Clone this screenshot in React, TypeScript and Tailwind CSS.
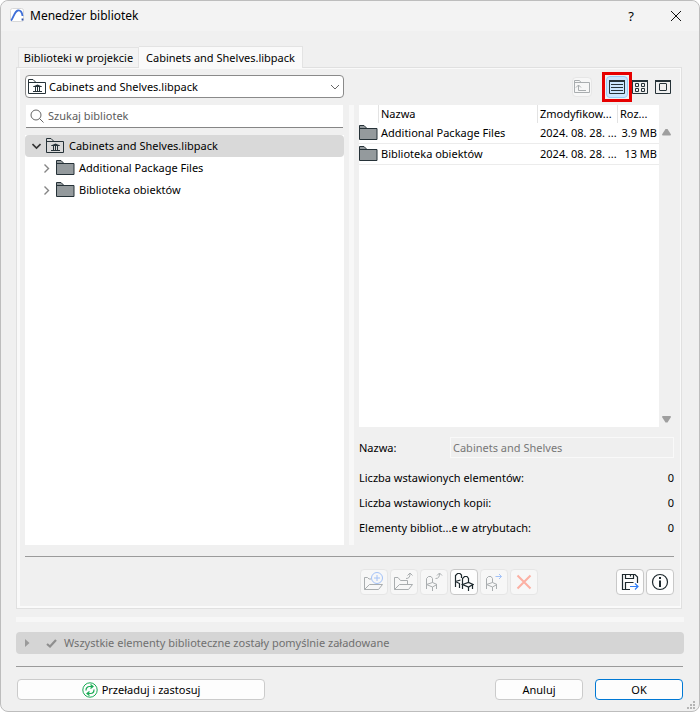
import { useState } from 'react'
import type { ReactNode } from 'react'

function AppLogo() {
  return (
    <svg className="h-4 w-4 shrink-0" viewBox="0 0 16 16" fill="none" aria-hidden="true">
      <rect x="0.5" y="0.5" width="13" height="13" rx="2" fill="#fff" stroke="#d8d8d8" />
      <path d="M1 12.500C3 11 4.500 3 8 2.500c2.500-.3 4 1.500 4.500 5.500" stroke="#3f6fd8" strokeWidth="1.800" />
      <path d="M12.500 10.500v2" stroke="#2c50a8" strokeWidth="1.800" />
    </svg>
  )
}

function FolderIcon() {
  return (
    <svg className="h-4 w-[19px] shrink-0" viewBox="0 0 19 16" aria-hidden="true">
      <path d="M.5 14.500V.5h4.500l3 3h10v11z" fill="#949a9d" stroke="#263238" />
      <path d="M.5 3.500h8" stroke="#263238" />
    </svg>
  )
}

function LibraryIcon() {
  return (
    <svg className="h-4 w-[19px] shrink-0" viewBox="0 0 19 16" fill="none" aria-hidden="true">
      <path d="M.5 14.500V.5h4.500l3 3h9.500v11z" stroke="#263238" />
      <path d="M.5 3.500h8" stroke="#263238" />
      <path d="M5 7.500L9.500 5.500 14 7.500v.5H5z" fill="#263238" />
      <path d="M7.500 8v4M9.500 8v4M11.500 8v4M5 12.500h9" stroke="#263238" />
    </svg>
  )
}

function ListViewIcon() {
  return (
    <svg className="h-3.5 w-4" viewBox="0 0 16 14" fill="none" stroke="#263238" aria-hidden="true">
      <path d="M.5 1v12.500h15V1" />
      <path d="M0 1h16" strokeWidth="2" />
      <path d="M2 4.500h12M2 7.500h12M2 10.500h12" />
    </svg>
  )
}

function GridViewIcon() {
  return (
    <svg className="h-3.5 w-4" viewBox="0 0 16 14" fill="none" stroke="#263238" aria-hidden="true">
      <path d="M.5 1v12.500h15V1" />
      <path d="M0 1h16" strokeWidth="2" />
      <path d="M3.500 3.500h3v3h-3zM9.500 3.500h3v3h-3zM3.500 8.500h3v3h-3zM9.500 8.500h3v3h-3z" />
    </svg>
  )
}

function SingleViewIcon() {
  return (
    <svg className="h-3.5 w-4" viewBox="0 0 16 14" fill="none" stroke="#263238" aria-hidden="true">
      <path d="M.5 1v12.500h15V1" />
      <path d="M0 1h16" strokeWidth="2" />
      <rect x="4.500" y="3.500" width="7" height="7" rx=".5" />
    </svg>
  )
}

function FolderUpIcon() {
  return (
    <svg className="h-[13px] w-4" viewBox="0 0 16 13" fill="none" stroke="#a9adaf" aria-hidden="true">
      <path d="M.5 12.500V.5h5l1.500 2h8.500v10zM.5 2.500H7" />
      <path d="M4.500 5v5.500H12M2 7.500l2.500-2.500L7 7.500" />
    </svg>
  )
}

function ChairBody() {
  return (
    <>
      <path d="M2.500 17V6.500l2-2h2.500l1.500 2v4" />
      <path d="M2.500 12.500l6-2 4.500 2-4.500 2.500z" />
      <path d="M8.500 15v4M12.500 12.500v4.500" />
    </>
  )
}

function NewFolderIcon() {
  return (
    <svg className="h-5 w-5" viewBox="0 0 20 20" fill="none" stroke="#a9adaf" aria-hidden="true">
      <path d="M.5 17.500V5.500h3l1.500 1.500h2M.5 17.500l5-5h13l-4 5z" />
      <circle cx="13" cy="6" r="5.500" stroke="#a3c2f7" />
      <path d="M13 3v6M10 6h6" stroke="#a3c2f7" />
    </svg>
  )
}

function OpenFolderIcon() {
  return (
    <svg className="h-5 w-5" viewBox="0 0 20 20" fill="none" stroke="#a9adaf" aria-hidden="true">
      <path d="M.5 17.500V5.500H4l2.500 3h7v4M.5 17.500l5-5h13l-4 5z" />
      <path d="M12 6.500c3 0 4-1.500 4-5M13.500 3.500L16 1l2.500 2.500" />
    </svg>
  )
}

function ChairUpIcon() {
  return (
    <svg className="h-5 w-5" viewBox="0 0 20 20" fill="none" stroke="#a9adaf" aria-hidden="true">
      <ChairBody />
      <path d="M11.500 6.500c3 0 4-1.500 4-5M13 3.500L15.500 1 18 3.500" />
    </svg>
  )
}

function ChairsIcon() {
  return (
    <svg className="h-5 w-5" viewBox="0 0 20 20" fill="none" stroke="#1d282d" strokeWidth="1.200" aria-hidden="true">
      <path d="M1.500 15V3.500l2-2H6L7.500 3v3M1.500 9.500l5-1.500M1.500 9.500l4 2V16" />
      <g transform="translate(6 0)"><ChairBody /></g>
    </svg>
  )
}

function ChairRightIcon() {
  return (
    <svg className="h-5 w-5" viewBox="0 0 20 20" fill="none" stroke="#a9adaf" aria-hidden="true">
      <ChairBody />
      <path d="M11.500 4.500h6M15 2l2.500 2.500L15 7" stroke="#a3c2f7" />
    </svg>
  )
}

function DeleteIcon() {
  return (
    <svg className="h-5 w-5" viewBox="0 0 20 20" fill="none" stroke="#fcb0a3" strokeWidth="2" aria-hidden="true">
      <path d="M3.500 3.500l13 13M16.500 3.500l-13 13" />
    </svg>
  )
}

function SaveIcon() {
  return (
    <svg className="h-5 w-5" viewBox="0 0 20 20" fill="none" stroke="#1d282d" strokeWidth="1.200" aria-hidden="true">
      <path d="M10 17.500H2.500v-15H15l2.500 2.500v6M5.500 2.500v4h8v-4M10.500 2.500v2M5.500 17.500v-7h8" />
      <path d="M10 14.500h8M15 11.500l3 3-3 3" stroke="#2f7cf6" />
    </svg>
  )
}

function InfoIcon() {
  return (
    <svg className="h-5 w-5" viewBox="0 0 20 20" fill="none" stroke="#1d282d" aria-hidden="true">
      <circle cx="10" cy="10" r="7.500" strokeWidth="1.200" />
      <path d="M10 5v2M10 8.500v6.500" strokeWidth="2" />
    </svg>
  )
}

function ReloadIcon() {
  return (
    <svg className="h-4 w-4" viewBox="0 0 16 16" fill="none" stroke="#1aab55" aria-hidden="true">
      <circle cx="8" cy="8" r="7.200" />
      <path d="M4 8.500C4 6 5.500 4.500 7.500 4.500H11M8.500 2.500l2.500 2-2.500 2" strokeWidth="1.200" />
      <path d="M12 7.500c0 2.500-1.500 4-3.500 4H5M7.500 9.500l-2.500 2 2.500 2" strokeWidth="1.200" />
    </svg>
  )
}

function ToolButton({ label, disabled, children }: { label: string; disabled?: boolean; children: ReactNode }) {
  return (
    <button
      type="button"
      aria-label={label}
      disabled={disabled}
      className="flex h-[26px] w-7 items-center justify-center rounded border border-[#c8c8c8] bg-[#fdfdfd] disabled:border-[#e6e6e6] disabled:bg-[#f7f7f7]"
    >
      {children}
    </button>
  )
}

const files = [
  { name: 'Additional Package Files', modified: '2024. 08. 28. ...', size: '3.9 MB' },
  { name: 'Biblioteka obiektów', modified: '2024. 08. 28. ...', size: '13 MB' },
]

const stats = [
  { label: 'Liczba wstawionych elementów:', value: 0 },
  { label: 'Liczba wstawionych kopii:', value: 0 },
  { label: 'Elementy bibliot...e w atrybutach:', value: 0 },
]

function LibraryTree() {
  const [open, setOpen] = useState(true)
  return (
    <ul className="flex-1 bg-white">
      <li>
        <button
          type="button"
          aria-expanded={open}
          onClick={() => setOpen(!open)}
          className="flex h-[22px] w-full items-center rounded-sm bg-[#d9d9d9] pl-[7px] text-left"
        >
          <svg className="mr-[5px] h-2.5 w-[9px]" viewBox="0 0 9 10" fill="none" stroke="#333" strokeWidth="1.600" aria-hidden="true">
            <path d="M.5 3l4 4 4-4" />
          </svg>
          <LibraryIcon />
          <span className="ml-1">Cabinets and Shelves.libpack</span>
        </button>
        {open && (
          <ul>
            {files.map((file) => (
              <li key={file.name}>
                <button type="button" className="flex h-[22px] w-full items-center pl-[18px] text-left">
                  <svg className="mr-1.5 h-2.5 w-[7px]" viewBox="0 0 7 10" fill="none" stroke="#858585" strokeWidth="1.400" aria-hidden="true">
                    <path d="M1.500 1.500L5.500 5.500l-4 4" />
                  </svg>
                  <FolderIcon />
                  <span className="ml-1">{file.name}</span>
                </button>
              </li>
            ))}
          </ul>
        )}
      </li>
    </ul>
  )
}

function FileTable() {
  return (
    <div className="flex flex-1">
      <div className="flex-1 bg-white">
        <table className="w-full table-fixed border-separate border-spacing-0">
          <thead>
            <tr className="h-[18px] text-left">
              <th className="w-5 border-r border-[#e3e3e3] p-0"></th>
              <th className="border-r border-[#e3e3e3] p-0 pl-0.5 font-normal">Nazwa</th>
              <th className="w-20 border-r border-[#e3e3e3] p-0 pl-0.5 font-normal">Zmodyfikow...</th>
              <th className="w-[41px] p-0 pl-0.5 font-normal">Roz...</th>
            </tr>
          </thead>
          <tbody>
            {files.map((file) => (
              <tr key={file.name} className="h-[21px] whitespace-nowrap">
                <td className="border-b border-[#ececec] p-0"><FolderIcon /></td>
                <td className="border-b border-[#ececec] p-0 pl-0.5">{file.name}</td>
                <td className="border-b border-[#ececec] p-0 pl-0.5">{file.modified}</td>
                <td className="border-b border-[#ececec] p-0 pr-0.5 text-right">{file.size}</td>
              </tr>
            ))}
          </tbody>
        </table>
      </div>
      <div className="flex w-[15px] flex-col items-center justify-between pt-6 pb-1">
        <svg className="h-[7px] w-[9px]" viewBox="0 0 9 7" fill="#9f9f9f" aria-hidden="true">
          <path d="M3.500 0h2L9 5.500 8.500 6.500H.5L0 5.500z" />
        </svg>
        <svg className="h-[7px] w-[9px]" viewBox="0 0 9 7" fill="#9f9f9f" aria-hidden="true">
          <path d="M3.500 6.500h2L9 1 8.500 0H.5L0 1z" />
        </svg>
      </div>
    </div>
  )
}

export default function App() {
  return (
    <div className="min-h-screen bg-white font-['Noto_Sans','Open_Sans',sans-serif] text-[11px] leading-4 text-black">
      <div className="relative flex min-h-screen flex-col rounded-lg border border-[#bdbdbd] bg-[#f0f0f0]">
        <header className="flex h-[30px] items-center rounded-t-lg bg-[#f3f3f3] pr-[17px] pl-[9px]">
          <AppLogo />
          <h1 className="ml-1 flex-1 text-xs">Menedżer bibliotek</h1>
          <button type="button" aria-label="Pomoc" className="mr-[33px] w-3 text-[13px]">?</button>
          <button type="button" aria-label="Zamknij">
            <svg className="h-3 w-3" viewBox="0 0 12 12" fill="none" stroke="#111" aria-hidden="true">
              <path d="M1 1l10 10M11 1L1 11" />
            </svg>
          </button>
        </header>

        <main className="flex flex-1 flex-col px-[15px] pt-[15px] pb-[11px]">
          <div role="tablist" className="z-10 -mb-px flex items-end pl-0.5">
            <button type="button" role="tab" aria-selected="false" className="mb-px h-5 w-[121px] border border-b-0 border-[#e3e3e3] bg-[#f3f3f3] whitespace-nowrap">
              Biblioteki w projekcie
            </button>
            <button type="button" role="tab" aria-selected="true" className="h-[22px] w-[164px] border border-b-0 border-l-0 border-[#e3e3e3] bg-[#fafafa] whitespace-nowrap">
              Cabinets and Shelves.libpack
            </button>
          </div>

          <section className="mr-0.5 flex flex-1 flex-col border border-[#e0e0e0] bg-[#fafafa] pt-px pr-px pb-0.5 pl-[3px]">
            <div className="flex flex-1 flex-col bg-[#f0f0f0] pt-1.5 pr-1.5 pb-[11px] pl-[5px]">
              <div className="flex gap-[15px]">
                <div className="relative flex-[319]">
                  <span className="pointer-events-none absolute top-1 left-[3px]">
                    <LibraryIcon />
                  </span>
                  <select aria-label="Biblioteka" className="h-[23px] w-full appearance-none rounded-sm border border-[#8a8a8a] bg-white pl-[23px]">
                    <option>Cabinets and Shelves.libpack</option>
                  </select>
                  <svg className="pointer-events-none absolute top-2 right-1 h-2 w-2.5" viewBox="0 0 10 8" fill="none" stroke="#666" aria-hidden="true">
                    <path d="M1 2l4 4 4-4" />
                  </svg>
                </div>
                <div className="flex flex-[315] items-center justify-end">
                  <button type="button" disabled aria-label="Folder nadrzędny" className="mr-3.5 flex h-5 w-5 items-center justify-center rounded-sm border border-[#e6e6e6] bg-[#f7f7f7]">
                    <FolderUpIcon />
                  </button>
                  <button type="button" aria-label="Lista" aria-pressed="true" className="relative mr-1 flex h-[22px] w-[22px] items-center justify-center rounded-sm border border-[#99cdf6] bg-[#cce6fd]">
                    <ListViewIcon />
                    <span className="absolute -inset-[5px] border-[3px] border-[#e60000]"></span>
                  </button>
                  <button type="button" aria-label="Ikony" className="mr-[7px]">
                    <GridViewIcon />
                  </button>
                  <button type="button" aria-label="Podgląd" className="mr-[3px]">
                    <SingleViewIcon />
                  </button>
                </div>
              </div>

              <div className="mt-[7px] flex flex-1 gap-[5px]">
                <div className="flex flex-[319] flex-col">
                  <label className="mx-px mb-[7px] flex h-[23px] items-center border-b border-[#868686] bg-white pl-1">
                    <svg className="h-3.5 w-3.5" viewBox="0 0 14 14" fill="none" stroke="#666" aria-hidden="true">
                      <circle cx="6" cy="6" r="5" />
                      <path d="M9.500 9.500l4 4" />
                    </svg>
                    <input type="search" aria-label="Szukaj bibliotek" placeholder="Szukaj bibliotek" className="ml-1 min-w-0 flex-1 outline-none placeholder:text-[#5c5c5c]" />
                  </label>
                  <LibraryTree />
                </div>

                <div className="w-[5px] bg-[#f8f8f8]"></div>

                <div className="flex flex-[315] flex-col">
                  <FileTable />
                  <div className="mt-2.5 mb-[7px] flex h-[21px] items-center">
                    <label htmlFor="library-name" className="w-[91px]">Nazwa:</label>
                    <input id="library-name" disabled defaultValue="Cabinets and Shelves" className="h-full min-w-0 flex-1 border border-[#f9f9f9] bg-[#efefef] px-0.5 text-[#777]" />
                  </div>
                  <dl className="pb-[5px]">
                    {stats.map((stat) => (
                      <div key={stat.label} className="flex h-[25px] items-center justify-between">
                        <dt>{stat.label}</dt>
                        <dd>{stat.value}</dd>
                      </div>
                    ))}
                  </dl>
                </div>
              </div>

              <hr className="mt-[11px] border-[#9b9b9b]" />

              <div className="mt-3 flex justify-end gap-0.5">
                <ToolButton label="Nowy folder" disabled><NewFolderIcon /></ToolButton>
                <ToolButton label="Eksportuj folder" disabled><OpenFolderIcon /></ToolButton>
                <ToolButton label="Eksportuj obiekt" disabled><ChairUpIcon /></ToolButton>
                <ToolButton label="Duplikaty"><ChairsIcon /></ToolButton>
                <ToolButton label="Przenieś obiekt" disabled><ChairRightIcon /></ToolButton>
                <ToolButton label="Usuń" disabled><DeleteIcon /></ToolButton>
                <div className="w-[74px]"></div>
                <ToolButton label="Zapisz jako"><SaveIcon /></ToolButton>
                <ToolButton label="Informacje"><InfoIcon /></ToolButton>
              </div>
            </div>
          </section>

          <div className="mt-2 h-[5px] bg-[#f7f7f7]"></div>

          <button type="button" disabled className="mt-2.5 flex h-[22px] items-center rounded bg-[#d5d5d5] pl-[9px] text-[#707070]">
            <svg className="h-2 w-[5px]" viewBox="0 0 5 8" fill="#9a9a9a" aria-hidden="true">
              <path d="M0 0l4.500 4L0 8z" />
            </svg>
            <svg className="mr-[7px] ml-4 h-[9px] w-[11px]" viewBox="0 0 11 9" fill="none" stroke="#8e8e8e" strokeWidth="2.200" aria-hidden="true">
              <path d="M1 5l3 2.500L10 1" />
            </svg>
            Wszystkie elementy biblioteczne zostały pomyślnie załadowane
          </button>

          <hr className="mt-3 mr-px border-[#9b9b9b]" />

          <footer className="mt-3 flex gap-3 px-px">
            <button type="button" className="flex h-[21px] w-[248px] items-center justify-center gap-1 rounded border border-[#cbcbcb] bg-[#fdfdfd]">
              <ReloadIcon />
              Przeładuj i zastosuj
            </button>
            <button type="button" className="ml-auto h-[21px] w-[88px] rounded border border-[#cbcbcb] bg-[#fdfdfd]">Anuluj</button>
            <button type="button" className="h-[21px] w-[88px] rounded border border-[#0078d4] bg-[#fdfdfd]">OK</button>
          </footer>
        </main>

        <svg className="absolute right-1 bottom-0.5 h-2 w-2" viewBox="0 0 8 8" fill="#b5b5b5" aria-hidden="true">
          <path d="M6 0h2v2H6zM6 3h2v2H6zM3 3h2v2H3zM6 6h2v2H6zM3 6h2v2H3zM0 6h2v2H0z" />
        </svg>
      </div>
    </div>
  )
}
